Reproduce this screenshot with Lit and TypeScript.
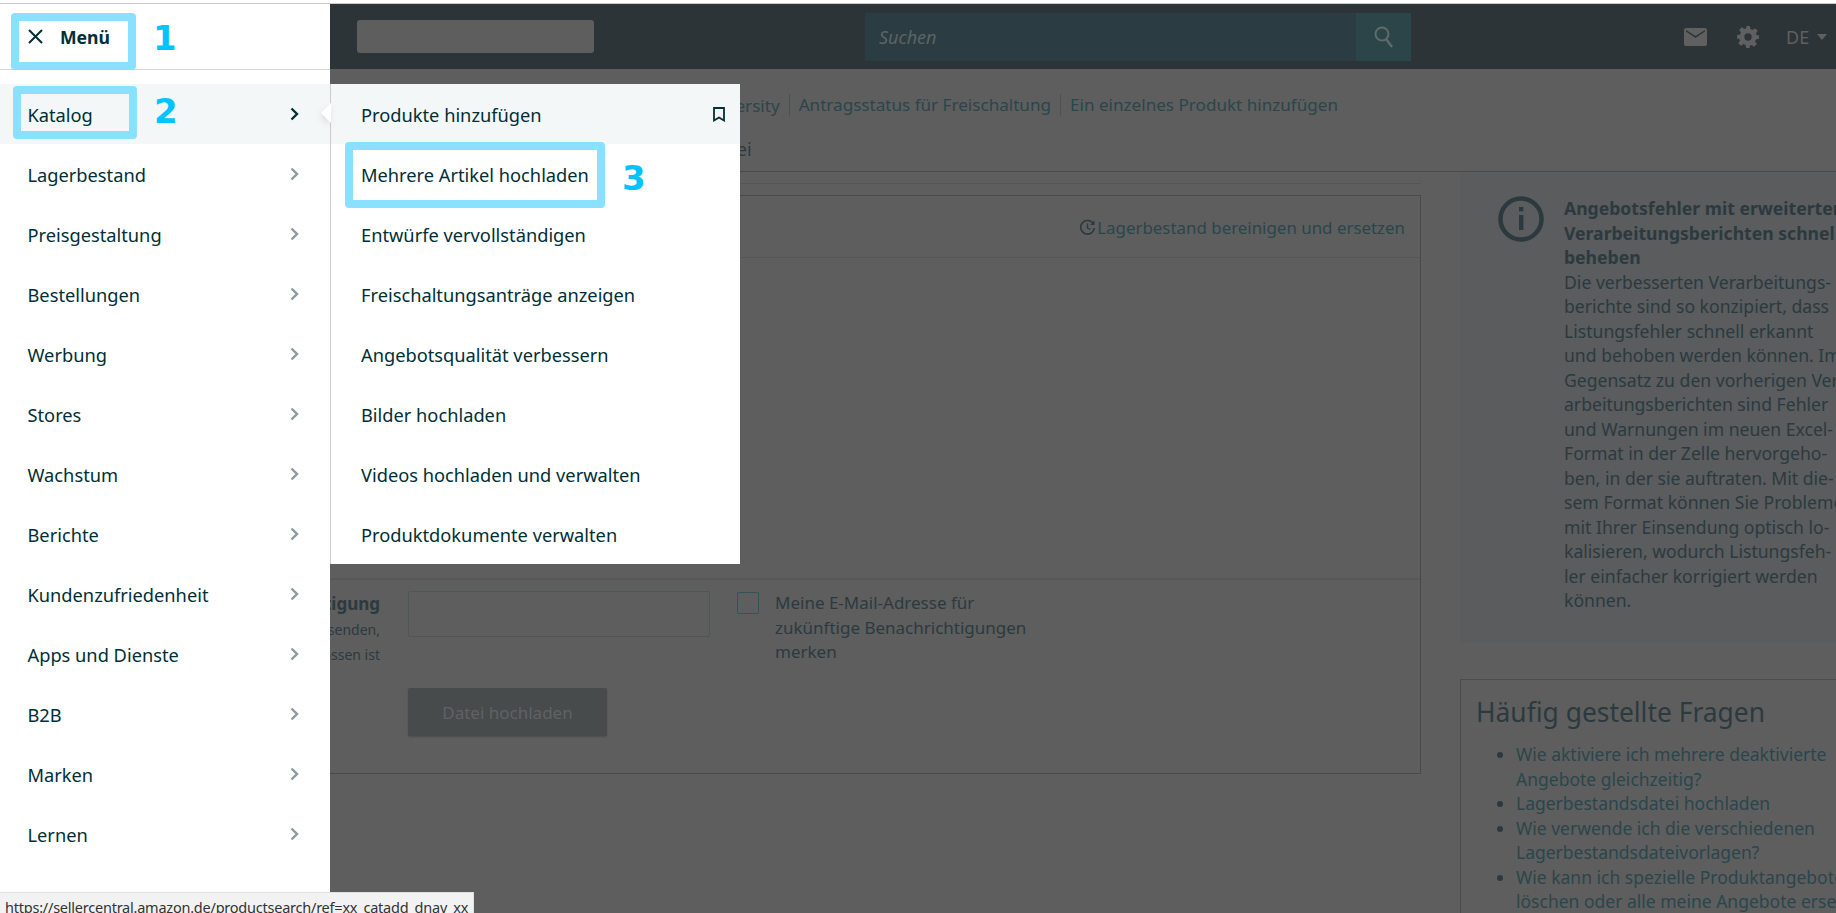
import { LitElement, html, css, svg } from "lit";
import { customElement } from "lit/decorators.js";

const NAV = ["Katalog","Lagerbestand","Preisgestaltung","Bestellungen","Werbung","Stores","Wachstum","Berichte","Kundenzufriedenheit","Apps und Dienste","B2B","Marken","Lernen"];
const SUB = ["Produkte hinzufügen","Mehrere Artikel hochladen","Entwürfe vervollständigen","Freischaltungsanträge anzeigen","Angebotsqualität verbessern","Bilder hochladen","Videos hochladen und verwalten","Produktdokumente verwalten"];
const INFO_HEAD = ["Angebotsfehler mit erweiterten","Verarbeitungsberichten schnell","beheben"];
const INFO_BODY = ["Die verbesserten Verarbeitungs-","berichte sind so konzipiert, dass","Listungsfehler schnell erkannt","und behoben werden können. Im","Gegensatz zu den vorherigen Ver-","arbeitungsberichten sind Fehler","und Warnungen im neuen Excel-","Format in der Zelle hervorgeho-","ben, in der sie auftraten. Mit die-","sem Format können Sie Probleme","mit Ihrer Einsendung optisch lo-","kalisieren, wodurch Listungsfeh-","ler einfacher korrigiert werden","können."];
const FAQ = [["Wie aktiviere ich mehrere deaktivierte","Angebote gleichzeitig?"],["Lagerbestandsdatei hochladen"],["Wie verwende ich die verschiedenen","Lagerbestandsdateivorlagen?"],["Wie kann ich spezielle Produktangebote","löschen oder alle meine Angebote ersetzen?"]];

const chevron = svg`<path d="M1.5 1.5 L7 7 L1.5 12.5" fill="none" stroke="currentColor" stroke-width="2.4"/>`;

@customElement("app-root")
export class AppRoot extends LitElement {
  static styles = css`
    :host { display: block; width: 1836px; height: 913px; position: relative; overflow: hidden; background: #5e5e5e; font-family: "Noto Sans", sans-serif; font-size: 18px; color: #2c3a3f; }
    .top { height: 3px; background: #fff; border-bottom: 1px solid #ccc; }
    header { height: 65px; background: #2c3437; display: flex; align-items: center; padding-left: 357px; }
    .logo { width: 237px; height: 33px; background: #5e5e5e; border-radius: 3px; }
    .search { width: 546px; height: 48px; margin-left: 271px; background: #2b3d42; display: flex; align-items: center; }
    .search span { flex: 1; padding-left: 14px; font-style: italic; font-size: 18px; color: #5a6466; }
    .search b { width: 55px; height: 100%; background: #2b4549; display: flex; align-items: center; justify-content: center; color: #5f6b6e; }
    .icons { margin-left: 273px; display: flex; align-items: center; color: #606060; }
    .gear { margin-left: 30px; }
    .lang { margin-left: 27px; font-size: 18px; }
    .caret { margin-left: 8px; width: 0; height: 0; border: 5.5px solid transparent; border-top: 6px solid #606060; border-bottom: 0; }
    .links { height: 72px; display: flex; justify-content: flex-end; align-items: center; padding-right: 498px; color: #2a464c; font-size: 17.1px; }
    .links a + a { margin-left: 9px; padding-left: 9px; border-left: 1px solid #4b5254; line-height: 22px; }
    .crumb { height: 31px; padding-left: 707px; box-sizing: border-box; line-height: 17px; border-bottom: 1px solid #4a4a4a; color: #2c3a3f; font-size: 18px; }
    .body { display: grid; grid-template-columns: 1421px 1fr; column-gap: 39px; }
    .rule { margin-top: 11px; border-top: 1px solid #555; }
    .card { margin: 11px 0 0 60px; height: 577px; border: 1px solid #4a4a4a; display: flex; flex-direction: column; }
    .card-head { height: 62px; border-bottom: 1px solid #565656; display: flex; align-items: center; justify-content: flex-end; padding: 2px 15px 0 0; color: #2a464c; font-size: 16.9px; box-sizing: border-box; flex: none; }
    .card-head svg { margin-right: 1px; }
    .card-fill { flex: 1; }
    .form { height: 195px; box-sizing: border-box; border-top: 2px solid #585858; padding-top: 11px; display: flex; flex: none; }
    .labels { width: 319px; text-align: right; font-size: 14px; line-height: 25px; white-space: nowrap; }
    .labels b { font-size: 17px; display: block; line-height: 26px; }
    .field { margin-left: 28px; width: 302px; }
    .input { height: 46px; box-sizing: border-box; border: 1px solid #4e5658; border-radius: 2px; }
    .btn { margin-top: 51px; width: 199px; height: 48px; background: #474b4c; border-radius: 2px; color: #5f6263; display: flex; align-items: center; justify-content: center; box-shadow: 0 1px 2px #4c4c4c; font-size: 17px; }
    .check { margin: 1px 0 0 27px; width: 22px; height: 22px; box-sizing: border-box; border: 1px solid #33525a; border-radius: 1px; }
    .agree { margin-left: 16px; line-height: 24.5px; font-size: 17px; white-space: nowrap; }
    .side { overflow: hidden; min-width: 0; }
    .info { height: 471px; box-sizing: border-box; background: #5a5c5e; padding: 24px 0 0 38px; display: flex; white-space: nowrap; }
    .info-ico { flex: none; margin-right: 20px; }
    .info p { margin: 0; font-size: 17.6px; line-height: 24.5px; }
    .info p b { display: block; }
    .faq { margin-top: 36px; border: 1px solid #4c4c4c; border-right: 0; height: 300px; padding: 12px 0 0 15px; white-space: nowrap; }
    .faq h2 { margin: 0 0 10px; font-size: 26.4px; font-weight: 400; line-height: 40px; }
    .faq ul { margin: 0; padding-left: 40px; font-size: 17.5px; line-height: 24.5px; }
    .faq a { color: #2a464c; }
    .nav { position: absolute; left: 0; top: 4px; width: 330px; height: 909px; background: #fff; color: #002f36; font-size: 18.25px; }
    .nav-head { height: 66px; box-sizing: border-box; border-bottom: 1px solid #d5d5d5; display: flex; align-items: center; padding-left: 28px; font-weight: 700; font-size: 17.6px; }
    .nav-head span { margin-left: 17px; }
    .nav ul { list-style: none; margin: 14px 0 0; padding: 0; }
    .nav li { height: 60px; display: flex; align-items: center; padding-left: 27.5px; padding-right: 31px; box-sizing: border-box; justify-content: space-between; }
    .nav li span { padding-top: 1px; }
    .nav li svg { color: #8a9a9d; flex: none; }
    .nav li.on { background: #f3f7f8; }
    .nav li.on svg { color: #002f36; }
    .sub { position: absolute; left: 330px; top: 84px; width: 410px; height: 480px; box-sizing: border-box; border-left: 1px solid #ccc; background: #fff; color: #002f36; font-size: 18.25px; }
    .sub div { height: 60px; display: flex; align-items: center; justify-content: space-between; padding: 0 15px 0 30px; box-sizing: border-box; }
    .sub div span { padding-top: 1px; }
    .sub div.on { background: #f3f7f8; }
    .notch { position: absolute; left: 321px; top: 103px; width: 10px; height: 20px; filter: drop-shadow(-1px 3px 3px rgba(0,0,0,.1)); }
    .notch i { display: block; width: 100%; height: 100%; background: #fff; clip-path: polygon(0 50%, 100% 0, 100% 100%); }
    .mark { position: absolute; border: 8px solid #89e0ff; border-radius: 4px; box-sizing: border-box; }
    .m1 { left: 11px; top: 13px; width: 125px; height: 57px; }
    .m2 { left: 13px; top: 86px; width: 124px; height: 53px; }
    .m3 { left: 345px; top: 142px; width: 260px; height: 66px; }
    .num { position: absolute; font-family: "DejaVu Sans", sans-serif; font-weight: 700; font-size: 34px; line-height: 40px; color: #00c3ff; }
    .n1 { left: 153px; top: 18px; }
    .n2 { left: 154px; top: 91px; }
    .n3 { left: 622px; top: 158px; }
    .status { position: absolute; left: 0; top: 892px; width: 474px; height: 21px; box-sizing: border-box; background: #f2f2f2; border-top: 1px solid #e0e0e0; border-right: 1px solid #e0e0e0; padding-left: 5px; font-size: 14.5px; letter-spacing: -.23px; line-height: 28px; color: #333; white-space: nowrap; overflow: hidden; }
  `;

  render() {
    return html`
      <div class="top"></div>
      <header>
        <div class="logo"></div>
        <div class="search">
          <span>Suchen</span>
          <b><svg width="22" height="24" viewBox="0 0 22 24"><circle cx="9" cy="9" r="6.5" fill="none" stroke="currentColor" stroke-width="2"/><path d="M13 14 L19 22" stroke="currentColor" stroke-width="2.4"/></svg></b>
        </div>
        <div class="icons">
          <svg width="23" height="18" viewBox="0 0 23 18"><path d="M2 0H21a2 2 0 0 1 2 2V16a2 2 0 0 1-2 2H2a2 2 0 0 1-2-2V2a2 2 0 0 1 2-2Z M2 3.5 L11.5 10 L21 3.5 V2 L11.5 8 L2 2Z" fill="currentColor" fill-rule="evenodd"/></svg>
          <svg class="gear" width="22" height="22" viewBox="0 0 24 24"><path fill="currentColor" fill-rule="evenodd" d="M10 0h4l.6 3.3 2.3 1 2.8-1.9 2.9 2.9-1.9 2.8 1 2.3L24 10v4l-3.3.6-1 2.3 1.9 2.8-2.9 2.9-2.8-1.9-2.3 1L14 24h-4l-.6-3.3-2.3-1-2.8 1.9-2.9-2.9 1.9-2.8-1-2.3L0 14v-4l3.3-.6 1-2.3-1.9-2.8 2.9-2.9 2.8 1.9 2.3-1ZM12 8a4 4 0 1 0 0 8 4 4 0 0 0 0-8Z"/></svg>
          <span class="lang">DE</span><i class="caret"></i>
        </div>
      </header>
      <div class="links"><a>Seller University</a><a>Antragsstatus für Freischaltung</a><a>Ein einzelnes Produkt hinzufügen</a></div>
      <div class="crumb">Datei</div>
      <div class="body">
        <div>
          <div class="rule"></div>
          <section class="card">
            <div class="card-head">
              <svg width="17" height="17" viewBox="0 0 17 17"><path d="M14.5 5A6.8 6.8 0 1 0 15.3 9" fill="none" stroke="#2c3a3f" stroke-width="1.6"/><path d="M15.5 1.5V6H11Z" fill="#2c3a3f"/><path d="M8.5 4.5V9L11.5 10.5" fill="none" stroke="#2c3a3f" stroke-width="1.3"/></svg>
              <a>Lagerbestand bereinigen und ersetzen</a>
            </div>
            <div class="card-fill"></div>
            <div class="form">
              <div class="labels"><b>Bestätigung</b>E-Mail senden,<br>abgeschlossen ist</div>
              <div class="field">
                <div class="input"></div>
                <div class="btn">Datei hochladen</div>
              </div>
              <div class="check"></div>
              <div class="agree">Meine E-Mail-Adresse für<br>zukünftige Benachrichtigungen<br>merken</div>
            </div>
          </section>
        </div>
        <aside class="side">
          <div class="info">
            <svg class="info-ico" width="46" height="46" viewBox="0 0 46 46"><circle cx="23" cy="23" r="20.5" fill="none" stroke="#2c3a3f" stroke-width="4.5"/><rect x="21" y="11" width="4.4" height="4.4" fill="#2c3a3f"/><rect x="21" y="19" width="4.4" height="15" fill="#2c3a3f"/></svg>
            <p><b>${INFO_HEAD.map((l) => html`${l}<br>`)}</b>${INFO_BODY.map((l) => html`${l}<br>`)}</p>
          </div>
          <div class="faq">
            <h2>Häufig gestellte Fragen</h2>
            <ul>${FAQ.map((q) => html`<li><a>${q.map((l) => html`${l}<br>`)}</a></li>`)}</ul>
          </div>
        </aside>
      </div>

      <nav class="nav">
        <div class="nav-head">
          <svg width="15" height="15" viewBox="0 0 15 15"><path d="M1 1L14 14M14 1L1 14" stroke="currentColor" stroke-width="2"/></svg>
          <span>Menü</span>
        </div>
        <ul>${NAV.map((n, i) => html`<li class=${i === 0 ? "on" : ""}><span>${n}</span><svg width="9" height="14" viewBox="0 0 9 14">${chevron}</svg></li>`)}</ul>
      </nav>
      <div class="sub">
        ${SUB.map((s, i) => html`<div class=${i === 0 ? "on" : ""}><span>${s}</span>${i === 0 ? html`<svg width="12" height="15" viewBox="0 0 12 15"><path d="M1 1H11V13.5L6 10.5L1 13.5Z" fill="none" stroke="currentColor" stroke-width="1.8"/></svg>` : ""}</div>`)}
      </div>
      <div class="notch"><i></i></div>
      <div class="mark m1"></div><div class="num n1">1</div>
      <div class="mark m2"></div><div class="num n2">2</div>
      <div class="mark m3"></div><div class="num n3">3</div>
      <div class="status">https://sellercentral.amazon.de/productsearch/ref=xx_catadd_dnav_xx</div>
    `;
  }
}
